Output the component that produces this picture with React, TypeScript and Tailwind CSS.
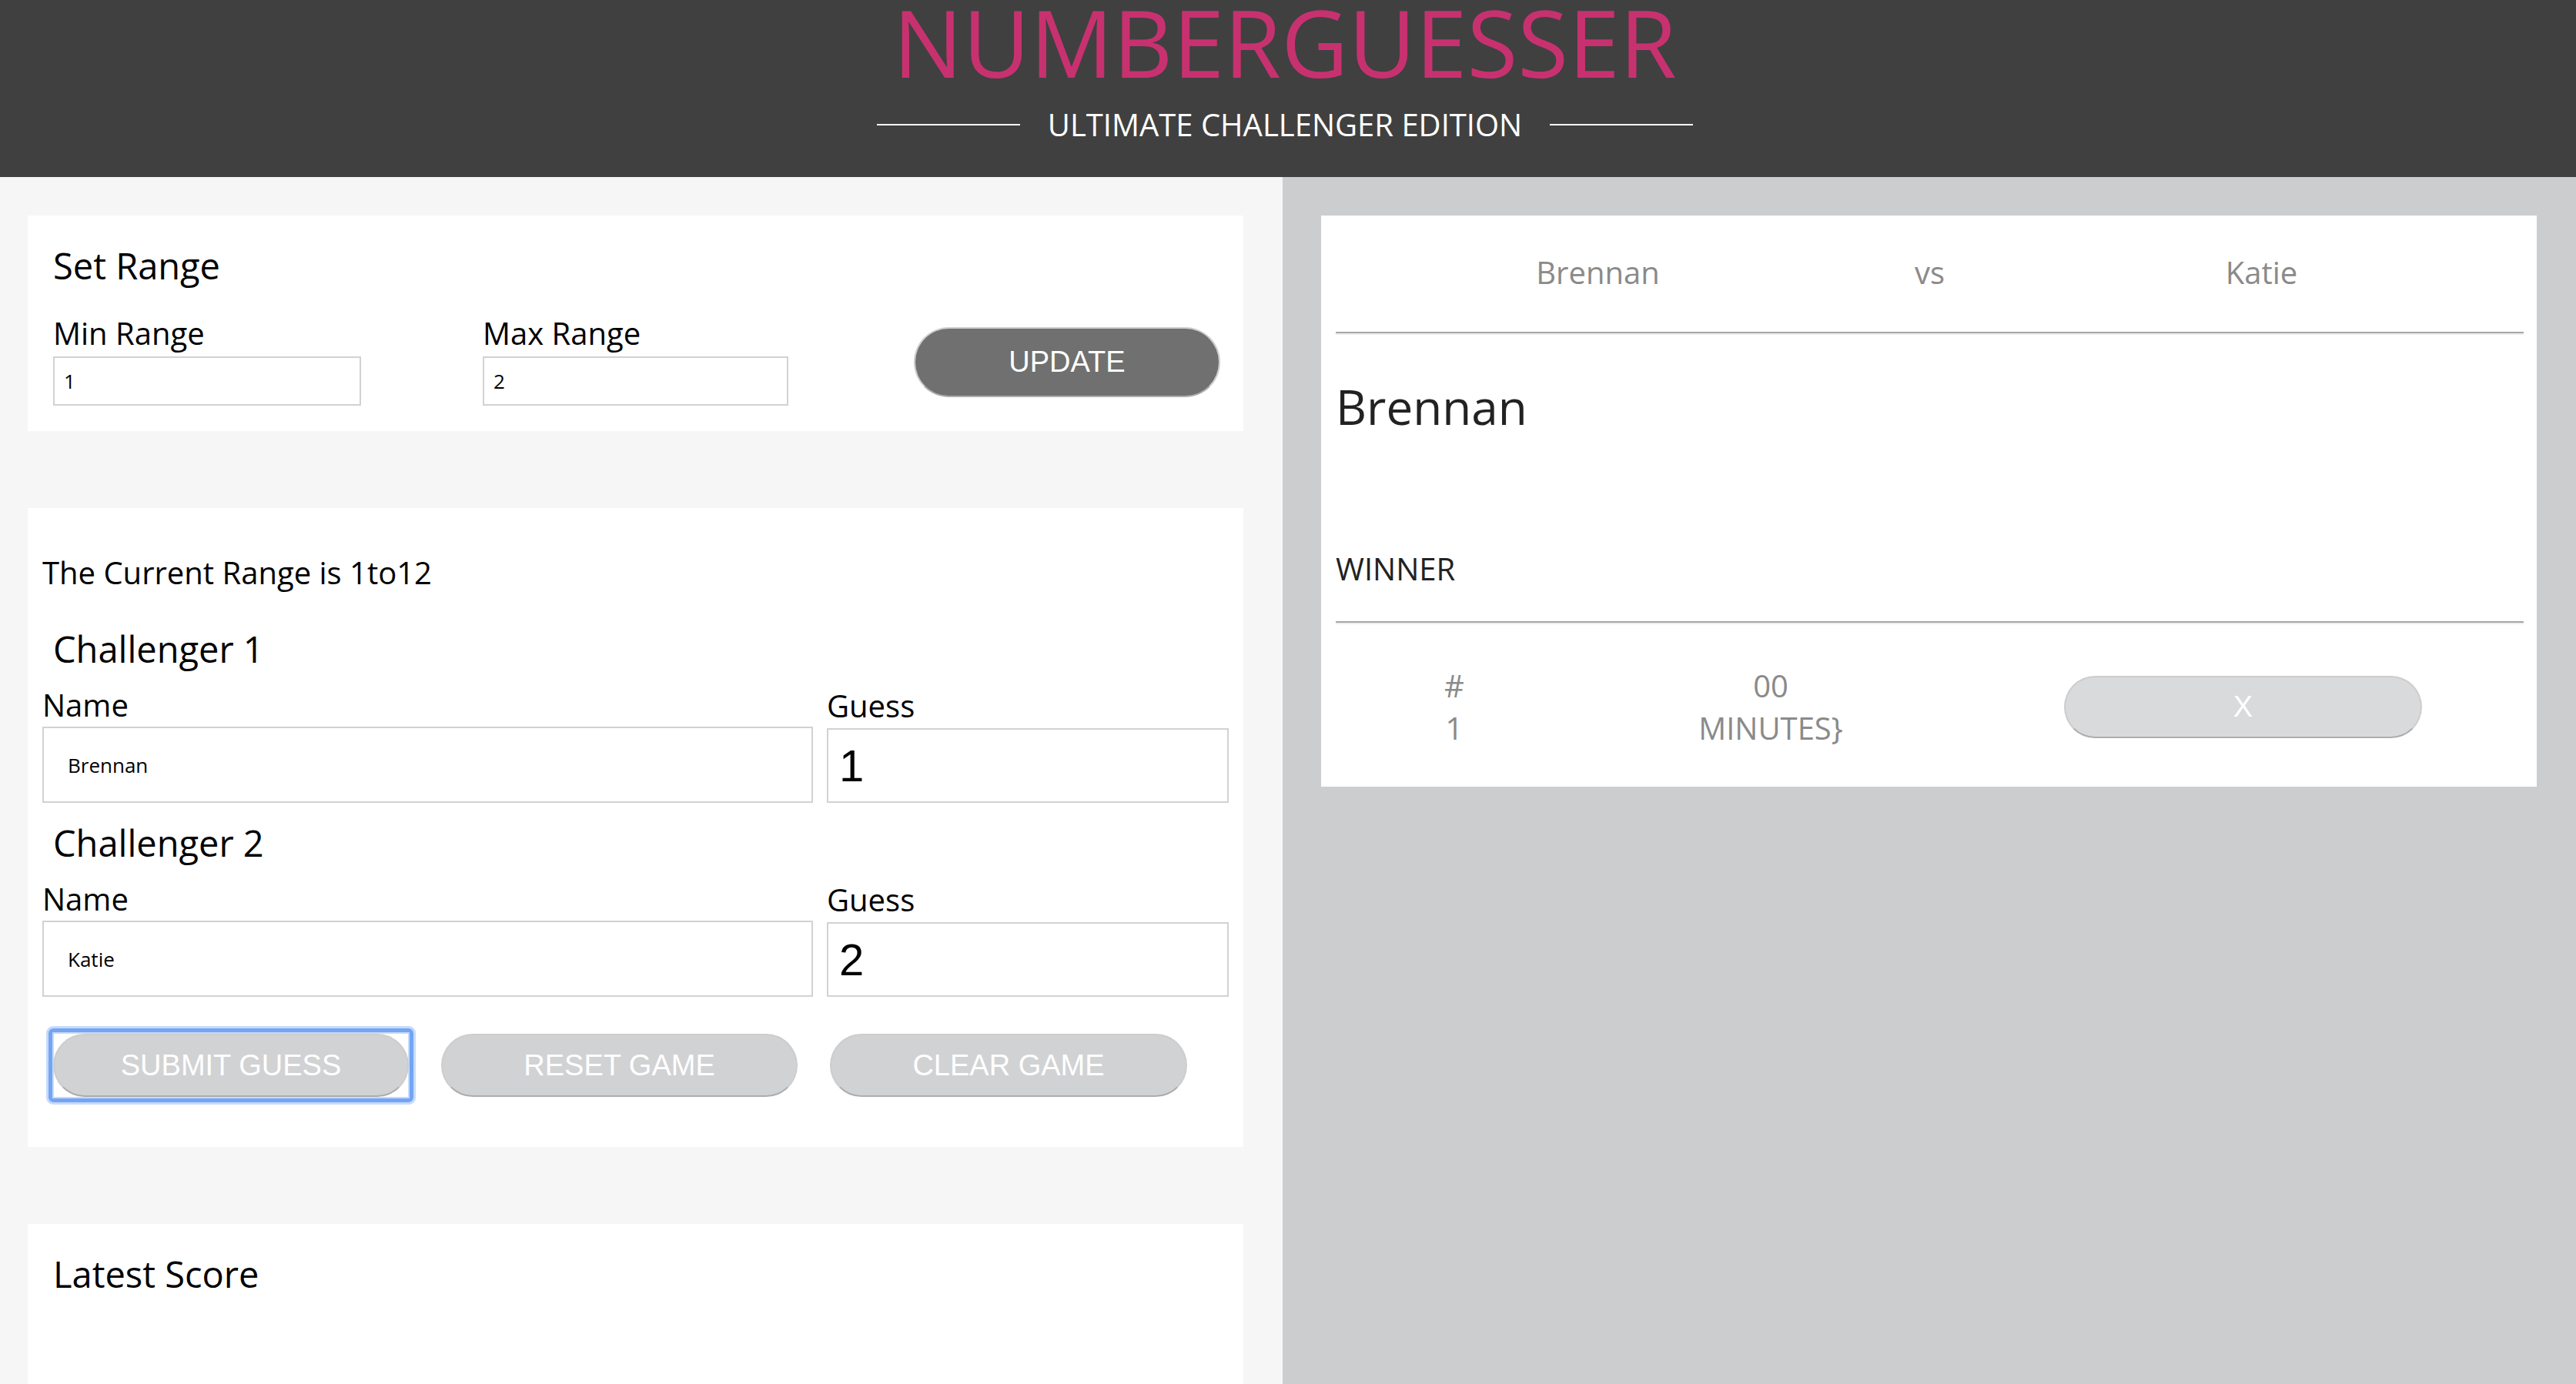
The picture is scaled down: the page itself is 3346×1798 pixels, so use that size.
const sans = "font-['Open_Sans',sans-serif]";
const arial = "font-['Liberation_Sans',Arial,sans-serif]";

function Rule() {
  return <div className="h-0 border-t-2 border-b-2 border-t-[#a6a6a6] border-b-[#eeeeee]" />;
}

function Label({ children }: { children: React.ReactNode }) {
  return <div className="text-[40px] leading-[54px] text-black">{children}</div>;
}

function PillButton({ children, className = "" }: { children: React.ReactNode; className?: string }) {
  return (
    <button
      className={`${arial} rounded-full border-2 border-[#cdcdcd] border-b-[#adadad] text-[38px] text-white ${className}`}
    >
      {children}
    </button>
  );
}

function Challenger({ n, name, guess }: { n: number; name: string; guess: string }) {
  return (
    <div>
      <h2 className="pl-[14px] text-[47px] font-medium leading-[64px] text-black">Challenger {n}</h2>
      <div className="mt-[14px] flex gap-[18px]">
        <div className="w-[1001px]">
          <Label>Name</Label>
          <input
            readOnly
            value={name}
            className="mt-[1px] h-[99px] w-full border-2 border-[#d2d2d2] bg-white pl-[31px] text-[26px] text-black outline-none"
          />
        </div>
        <div className="flex-1 pt-[1px]">
          <Label>Guess</Label>
          <input
            readOnly
            value={guess}
            className={`${arial} mt-[2px] h-[97px] w-full border-2 border-[#d2d2d2] bg-white pl-[14px] text-[58px] text-black outline-none`}
          />
        </div>
      </div>
    </div>
  );
}

export default function App() {
  return (
    <div className={`${sans} flex h-[1798px] w-full flex-col overflow-hidden`}>
      {/* header */}
      <header className="flex h-[230px] shrink-0 flex-col items-center bg-[#404040] pr-[8px]">
        <h1 className="mt-[5px] text-[120px] leading-[100px] text-[#c8316f]">NUMBERGUESSER</h1>
        <div className="mt-[37px] flex items-center gap-[36px]">
          <span className="h-[2px] w-[186px] bg-white" />
          <span className="text-[40px] leading-[40px] text-white">ULTIMATE CHALLENGER EDITION</span>
          <span className="h-[2px] w-[186px] bg-white" />
        </div>
      </header>

      <div className="flex flex-1">
        {/* left column */}
        <main className="flex w-[1666px] shrink-0 flex-col bg-[#f6f6f6] pl-[36px] pt-[50px]">
          <section className="h-[280px] w-[1579px] bg-white pl-[33px] pt-[33px]">
            <h2 className="text-[47px] font-medium leading-[64px] text-black">Set Range</h2>
            <div className="mt-[29px] flex items-end">
              <div className="w-[400px]">
                <Label>Min Range</Label>
                <input
                  readOnly
                  value="1"
                  className="mt-[3px] h-[64px] w-full border-2 border-[#d2d2d2] bg-white pl-[12px] text-[26px] text-black outline-none"
                />
              </div>
              <div className="ml-[158px] w-[397px]">
                <Label>Max Range</Label>
                <input
                  readOnly
                  value="2"
                  className="mt-[3px] h-[64px] w-full border-2 border-[#d2d2d2] bg-white pl-[12px] text-[26px] text-black outline-none"
                />
              </div>
              <PillButton className="mb-[11px] ml-[163px] h-[91px] w-[398px] bg-[#707070]">UPDATE</PillButton>
            </div>
          </section>

          <section className="mt-[100px] h-[830px] w-[1579px] bg-white px-[19px] pt-[57px]">
            <p className="text-[40px] leading-[54px] text-black">The Current Range is 1to12</p>
            <div className="mt-[40px]">
              <Challenger n={1} name="Brennan" guess="1" />
            </div>
            <div className="mt-[20px]">
              <Challenger n={2} name="Katie" guess="2" />
            </div>
            <div className="mt-[48px] flex gap-[42px] pl-[14px]">
              <div className="relative">
                <span className="absolute -inset-x-[6px] -inset-y-[7px] rounded-[6px] border-[5px] border-[#74a4f3] shadow-[0_0_0_3px_#c5dbfa,inset_0_0_0_2px_#c5dbfa]" />
                <PillButton className="relative h-[82px] w-[462px] bg-[#d1d2d4]">SUBMIT GUESS</PillButton>
              </div>
              <PillButton className="h-[82px] w-[463px] bg-[#d1d2d4]">RESET GAME</PillButton>
              <PillButton className="h-[82px] w-[464px] bg-[#d1d2d4]">CLEAR GAME</PillButton>
            </div>
          </section>

          <section className="mt-[100px] w-[1579px] flex-1 bg-white pl-[33px] pt-[33px]">
            <h2 className="text-[47px] font-medium leading-[64px] text-black">Latest Score</h2>
          </section>
        </main>

        {/* right column */}
        <aside className="flex-1 bg-[#cccdcf] pl-[50px] pt-[50px]">
          <div className="w-[1579px] bg-white pb-[49px] pl-[19px] pr-[17px] pt-[47px]">
            <div className="flex justify-center text-[40px] leading-[54px] text-[#8a8a8a]">
              <span className="w-[431px] text-center">Brennan</span>
              <span className="w-[431px] text-center">vs</span>
              <span className="w-[431px] text-center">Katie</span>
            </div>
            <div className="mt-[50px]">
              <Rule />
            </div>
            <div className="mt-[51px] text-[62px] font-medium leading-[84px] text-[#222]">Brennan</div>
            <div className="mt-[142px] text-[40px] leading-[54px] text-[#222]">WINNER</div>
            <div className="mt-[41px]">
              <Rule />
            </div>
            <div className="mt-[52px] flex items-center">
              <div className="w-[308px] text-center text-[40px] leading-[55px] text-[#8a8a8a]">
                <div>#</div>
                <div>1</div>
              </div>
              <div className="w-[514px] text-center text-[40px] leading-[55px] text-[#8a8a8a]">
                <div>00</div>
                <div>MINUTES{"}"}</div>
              </div>
              <PillButton className="ml-[124px] h-[81px] w-[465px] bg-[#d9dadc]">X</PillButton>
            </div>
          </div>
        </aside>
      </div>
    </div>
  );
}
